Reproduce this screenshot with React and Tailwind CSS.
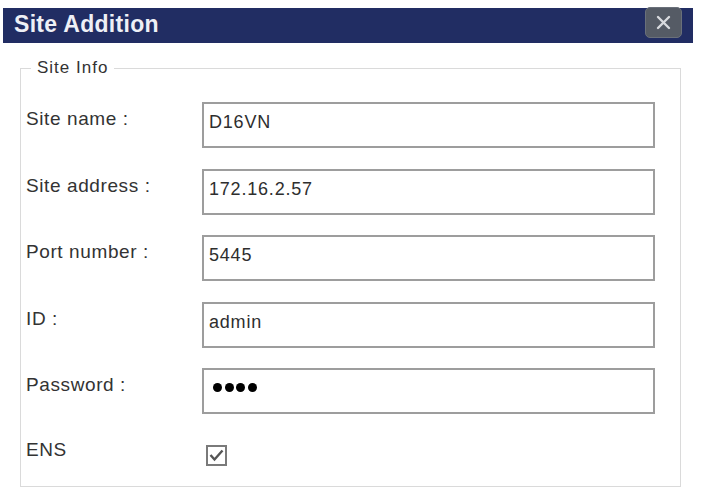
import React from 'react';

const fields = [
  { label: 'Site name :', value: 'D16VN' },
  { label: 'Site address :', value: '172.16.2.57' },
  { label: 'Port number :', value: '5445' },
  { label: 'ID :', value: 'admin' },
  { label: 'Password :', password: true },
];

function TextBox({ value, password }) {
  return (
    <div className="w-[453px] h-[46px] border-2 border-[#9d9d9d] bg-white pl-[5px] pt-[8px] text-[18px] leading-[20px] tracking-[0.8px] text-[#2e2e2e]">
      {password ? (
        <div className="flex gap-[2.5px] pt-[5px] pl-[4px]">
          <span className="w-[9px] h-[9px] rounded-full bg-black" />
          <span className="w-[9px] h-[9px] rounded-full bg-black" />
          <span className="w-[9px] h-[9px] rounded-full bg-black" />
          <span className="w-[9px] h-[9px] rounded-full bg-black" />
        </div>
      ) : (
        value
      )}
    </div>
  );
}

export default function App() {
  return (
    <div
      className="w-[701px] h-[492px] bg-white overflow-hidden"
      style={{ fontFamily: '"Liberation Sans", Arial, sans-serif' }}
    >
      {/* Title bar */}
      <div className="mt-[8px] ml-[3px] w-[690px] h-[35px] bg-[#212d63] flex items-start justify-between pl-[11px] pr-[11px]">
        <span className="pt-[2px] text-[23px] leading-[28px] font-bold tracking-[0.3px] text-[#eef0f6]">
          Site Addition
        </span>
        <button className="-mt-[1px] w-[37px] h-[31px] rounded-[5px] bg-[#555b65] border border-[#6a707a] flex items-center justify-center">
          <svg width="15" height="15" viewBox="0 0 15 15">
            <path d="M2 2 L13 13 M13 2 L2 13" stroke="#d8dade" strokeWidth="2.4" strokeLinecap="round" />
          </svg>
        </button>
      </div>

      {/* Site Info group */}
      <fieldset className="mt-[15px] ml-[20px] w-[661px] h-[429px] border border-[#dadada] px-0 pt-[24px] pb-0">
        <legend className="ml-[10px] px-[6px] text-[17px] leading-[20px] tracking-[1px] text-[#333]">
          Site Info
        </legend>
        <div className="flex flex-col gap-[20.5px]">
          {fields.map((f) => (
            <div key={f.label} className="flex items-start h-[46px]">
              <div className="w-[181px] pl-[5px] pt-[7px] text-[19px] leading-[20px] tracking-[0.6px] text-[#333]">
                {f.label}
              </div>
              <TextBox value={f.value} password={f.password} />
            </div>
          ))}
          <div className="flex items-start h-[30px]">
            <div className="w-[185px] pl-[5px] pt-[5px] text-[19px] leading-[20px] tracking-[0.6px] text-[#333]">
              ENS
            </div>
            <div className="mt-[10px] w-[21px] h-[21px] border-2 border-[#7a7a7a] bg-white flex items-center justify-center">
              <svg width="15" height="13" viewBox="0 0 15 13">
                <path d="M1.5 6 L5.5 10.5 L13.5 1.5" fill="none" stroke="#555" strokeWidth="2.4" />
              </svg>
            </div>
          </div>
        </div>
      </fieldset>
    </div>
  );
}
